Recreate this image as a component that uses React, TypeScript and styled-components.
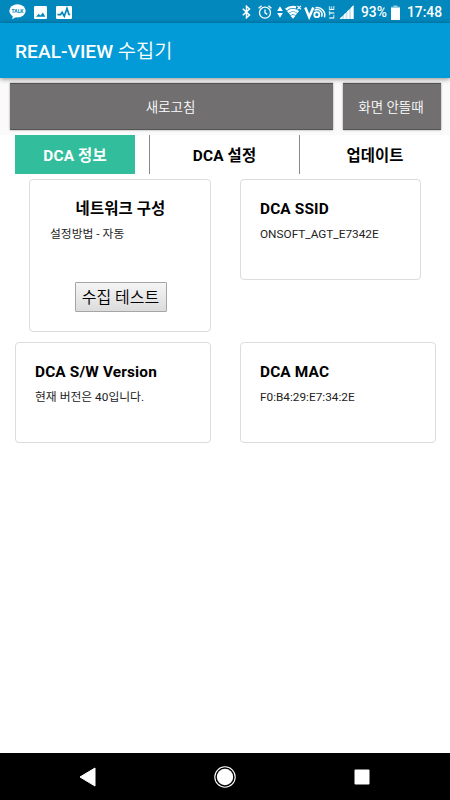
import styled, { createGlobalStyle } from "styled-components";

export default function App() {
  return (
    <Screen>
      <GlobalStyle />
      <StatusBar>
        <Notifications>
          <TalkIcon />
          <PictureIcon />
          <PulseIcon />
        </Notifications>
        <SystemIcons>
          <BluetoothIcon />
          <AlarmIcon />
          <DataArrowsIcon />
          <WifiIcon />
          <VolteIcon />
          <SignalIcon />
          <StatusText $width={26}>93%</StatusText>
          <BatteryIcon />
          <StatusText $width={35}>17:48</StatusText>
        </SystemIcons>
      </StatusBar>
      <AppBar>
        <AppTitle>
          REAL-VIEW <AppTitleLight>수집기</AppTitleLight>
        </AppTitle>
      </AppBar>
      <Actions>
        <ActionButton>새로고침</ActionButton>
        <ActionButton>화면 안뜰때</ActionButton>
      </Actions>
      <Tabs>
        <Tab $active>DCA 정보</Tab>
        <Tab>DCA 설정</Tab>
        <Tab>업데이트</Tab>
      </Tabs>
      <Content>
        <NetworkCard>
          <CardTitle $center>네트워크 구성</CardTitle>
          <CardText>설정방법 - 자동</CardText>
          <TestButton>수집 테스트</TestButton>
        </NetworkCard>
        <SsidCard>
          <CardTitle>DCA SSID</CardTitle>
          <CardText>ONSOFT_AGT_E7342E</CardText>
        </SsidCard>
        <Card>
          <CardTitle>DCA S/W Version</CardTitle>
          <CardText>현재 버전은 40입니다.</CardText>
        </Card>
        <Card>
          <CardTitle>DCA MAC</CardTitle>
          <CardText>F0:B4:29:E7:34:2E</CardText>
        </Card>
      </Content>
      <NavBar>
        <NavButton aria-label="Back">
          <svg width="18" height="20" viewBox="0 0 18 20">
            <path d="M16 1v18L1 10z" fill="#fff" stroke="#fff" strokeLinejoin="round" />
          </svg>
        </NavButton>
        <NavButton aria-label="Home">
          <svg width="22" height="22" viewBox="0 0 22 22">
            <circle cx="11" cy="11" r="10.2" fill="none" stroke="#fff" strokeWidth="1.1" />
            <circle cx="11" cy="11" r="8.2" fill="#fff" />
          </svg>
        </NavButton>
        <NavButton aria-label="Recents">
          <svg width="16" height="16" viewBox="0 0 16 16">
            <rect x=".5" y=".5" width="15" height="15" rx="1" fill="#fff" />
          </svg>
        </NavButton>
      </NavBar>
    </Screen>
  );
}

function TalkIcon() {
  return (
    <svg width="17" height="16" viewBox="0 0 17 16">
      <ellipse cx="8.5" cy="6.8" rx="8.2" ry="6.6" fill="#fff" />
      <path d="M4 11 3.2 15.2 8 12.5z" fill="#fff" />
      <text
        x="8.5"
        y="9"
        textAnchor="middle"
        textLength="12"
        lengthAdjust="spacingAndGlyphs"
        fontFamily="Roboto, sans-serif"
        fontSize="6"
        fontWeight="700"
        fill="#0288bd"
      >
        TALK
      </text>
    </svg>
  );
}

function PictureIcon() {
  return (
    <svg width="13" height="13" viewBox="0 0 13 13">
      <rect width="13" height="13" rx="1.3" fill="#fff" />
      <path d="M2 10.8 4.7 7.7l1.7 1.7L8.9 6.5l2.5 4.3z" fill="#0288bd" />
    </svg>
  );
}

function PulseIcon() {
  return (
    <svg width="16" height="13" viewBox="0 0 16 13">
      <rect width="16" height="13" rx="1.3" fill="#fff" />
      <path
        d="M1.500 8.700h3l1.600-2.400 2.200 3.900L11 2.500l1.900 6h1.300"
        fill="none"
        stroke="#0288bd"
        strokeWidth="1.7"
      />
    </svg>
  );
}

function BluetoothIcon() {
  return (
    <svg width="9" height="14" viewBox="0 0 9 14">
      <path
        d="M.8 3.8 7.5 10 4.5 12.7V1.3L7.5 4 .8 10.2"
        fill="none"
        stroke="#fff"
        strokeWidth="1.5"
      />
    </svg>
  );
}

function AlarmIcon() {
  return (
    <svg width="14" height="14" viewBox="0 0 14 14">
      <g fill="none" stroke="#fff" strokeWidth="1.3">
        <circle cx="7" cy="7.7" r="5.5" />
        <path d="M7 4.5v3.4l2.3 1.5M.6 3.3 3.6.8M13.4 3.3 10.4.8" />
      </g>
    </svg>
  );
}

function DataArrowsIcon() {
  return (
    <svg width="6" height="12" viewBox="0 0 6 12">
      <path d="M3 .3 5.8 5H.2zM3 11.700.2 7h5.600z" fill="#fff" />
    </svg>
  );
}

function WifiIcon() {
  return (
    <svg width="17" height="14" viewBox="0 0 17 14">
      <path d="M8 13.800 5.400 10.800Q8 9.200 10.600 10.800z" fill="#fff" />
      <g fill="none" stroke="#fff">
        <path
          d="M.8 4.500Q5.500.9 11 2.300M2.700 6.900Q8 3.100 13.300 6.900M4.600 9.300Q8 6.700 11.400 9.300"
          strokeWidth="2.4"
        />
        <path d="m12.400.8 3.600 3.600m0-3.600-3.600 3.600" strokeWidth="1.2" />
      </g>
    </svg>
  );
}

function VolteIcon() {
  return (
    <svg width="31" height="15" viewBox="0 0 31 15">
      <g fill="none" stroke="#fff">
        <path d="M1.300 2.500 5.200 12 9.300 2.500" strokeWidth="2.5" />
        <circle cx="12.8" cy="9.7" r="2.5" strokeWidth="1.8" />
        <path
          d="M10.500 5.300a5 5 0 0 1 7 6.500M11.500 2.700a7.800 7.800 0 0 1 9 9.700"
          strokeWidth="1.5"
        />
      </g>
      <text
        transform="translate(29.5 14) rotate(-90)"
        textLength="13"
        lengthAdjust="spacingAndGlyphs"
        fontFamily="Roboto, sans-serif"
        fontSize="8"
        fontWeight="500"
        fill="#fff"
      >
        LTE
      </text>
    </svg>
  );
}

function SignalIcon() {
  return (
    <svg width="15" height="14" viewBox="0 0 15 14">
      <path d="M.5 14 14.5.3V14z" fill="#fff" fillOpacity=".8" />
      <path
        d="M1 13.500 3 11.500V14H1zM5 9.600l1.500-1.500V14H5zM8.500 6.200 10 4.700V14H8.500zM12 2.700 14.500.3V14H12z"
        fill="#fff"
      />
    </svg>
  );
}

function BatteryIcon() {
  return (
    <svg width="9" height="15" viewBox="0 0 9 15">
      <path d="M2.500.5h4v1.300H9v1.500H0V1.800h2.500z" fill="#fff" fillOpacity=".6" />
      <path d="M0 3h9v12H0z" fill="#fff" />
    </svg>
  );
}

const GlobalStyle = createGlobalStyle`
  * {
    box-sizing: border-box;
  }
  body {
    margin: 0;
    background: #fff;
    font-family: Roboto, "Noto Sans CJK KR", sans-serif;
  }
  button {
    padding: 0;
    font-family: inherit;
  }
  svg {
    display: block;
    flex: none;
  }
`;

const Screen = styled.div`
  display: flex;
  flex-direction: column;
  width: 450px;
  height: 800px;
  overflow: hidden;
  background: #fff;
`;

const StatusBar = styled.header`
  display: flex;
  flex: none;
  justify-content: space-between;
  height: 23px;
  padding: 1px 8px 0 9px;
  background: #0288bd;
`;

const Notifications = styled.div`
  display: flex;
  align-items: center;
  gap: 9px;

  > :nth-child(2) {
    margin-left: -1px;
  }
`;

const SystemIcons = styled.div`
  display: flex;
  align-items: center;

  > * + * {
    margin-left: 7px;
  }
  > :nth-child(3) {
    margin-left: 5px;
  }
  > :nth-child(4),
  > :nth-child(5) {
    margin-left: 2px;
  }
  > :nth-child(6),
  > :nth-child(8) {
    margin-left: 4px;
  }
`;

const StatusText = styled.span<{ $width: number }>`
  width: ${({ $width }) => $width}px;
  color: #fff;
  font-size: 13.8px;
  font-weight: 500;
  line-height: 22px;
  white-space: nowrap;
`;

const AppBar = styled.div`
  position: relative;
  display: flex;
  flex: none;
  align-items: center;
  height: 55px;
  padding: 2px 15px 0;
  background: #039bd7;
  box-shadow: 0 1px 5px rgba(0, 0, 0, 0.45);
`;

const AppTitle = styled.h1`
  margin: 0;
  color: #fff;
  font-size: 19.2px;
  font-weight: 500;
  line-height: 28px;
`;

const AppTitleLight = styled.span`
  font-size: 19.8px;
  font-weight: 350;
`;

const Actions = styled.div`
  display: grid;
  flex: none;
  grid-template-columns: 323px 98px;
  gap: 10px;
  height: 57px;
  padding: 5px 9.5px;
  background: #fafafa;
`;

const ActionButton = styled.button`
  padding: 0 1px 2px 0;
  border: 1px solid #555354;
  border-width: 1px 0;
  background: #716f70;
  box-shadow: 0 0 2px rgba(0, 0, 0, 0.4);
  color: #fff;
  font-size: 13.5px;
  font-weight: 350;
`;

const Tabs = styled.nav`
  display: flex;
  flex: none;
  height: 39px;
`;

const Tab = styled.div<{ $active?: boolean }>`
  display: flex;
  flex: 1;
  align-items: center;
  justify-content: center;
  margin: ${({ $active }) => ($active ? "0 14px 0 15px" : "0")};
  padding-bottom: 2px;
  border-left: ${({ $active }) => ($active ? "none" : "1px solid #888")};
  background: ${({ $active }) => ($active ? "#32bd9d" : "#fff")};
  color: ${({ $active }) => ($active ? "#fff" : "#000")};
  font-size: 15.4px;
  font-weight: 700;
  letter-spacing: 0.15px;

  &:first-child {
    flex: 0 0 120px;
  }
  &:nth-child(2) {
    flex: 0 0 150px;
  }
`;

const Content = styled.main`
  display: grid;
  flex: 1;
  grid-template-columns: 196px 196px;
  grid-template-rows: 153px 101px;
  gap: 10px 29px;
  padding: 5px 15px 0;
`;

const Card = styled.section`
  padding: 19px;
  border: 1px solid #dcdcdc;
  border-radius: 4px;
`;

const NetworkCard = styled(Card)`
  display: flex;
  flex-direction: column;
  margin-left: 14px;
  padding: 19px 19px 19px 20px;
`;

const SsidCard = styled(Card)`
  height: 101px;
  margin-right: 15px;
`;

const CardTitle = styled.h2<{ $center?: boolean }>`
  margin: 0;
  color: #000;
  font-size: 15.4px;
  font-weight: 700;
  letter-spacing: 0.15px;
  line-height: 20px;
  text-align: ${({ $center }) => ($center ? "center" : "left")};
`;

const CardText = styled.p`
  margin: 6px 0 0;
  color: #222;
  font-size: 11.8px;
  line-height: 18px;
  white-space: nowrap;
`;

const TestButton = styled.button`
  align-self: center;
  width: 92px;
  height: 30px;
  margin-top: 39px;
  padding-bottom: 2px;
  border: 1px solid #a5a5a5;
  border-radius: 1px;
  background: linear-gradient(#f5f5f5, #dcdcdc);
  color: #000;
  font-size: 16px;
  font-weight: 350;
`;

const NavBar = styled.footer`
  display: flex;
  flex: none;
  align-items: center;
  justify-content: center;
  gap: 92px;
  height: 47px;
  background: #000;
`;

const NavButton = styled.button`
  display: flex;
  align-items: center;
  justify-content: center;
  width: 45px;
  height: 40px;
  border: 0;
  background: none;
`;
